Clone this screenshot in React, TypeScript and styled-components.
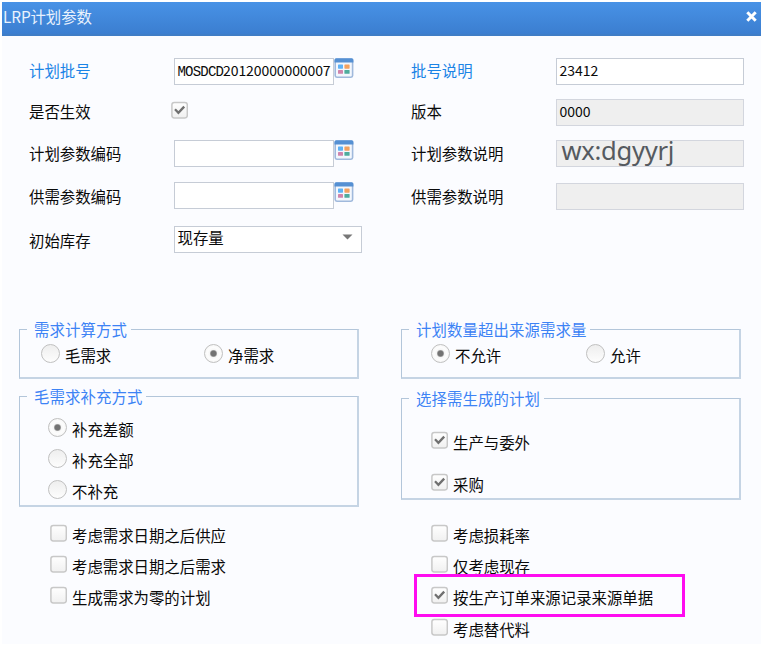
import React from 'react';
import styled, { createGlobalStyle } from 'styled-components';

const GlobalStyle = createGlobalStyle`
  * { box-sizing: border-box; }
  body {
    margin: 0;
    background: #fff;
    font-family: "Noto Sans CJK SC", sans-serif;
    font-size: 15.4px;
    color: #0a0a0a;
  }
`;

const Dialog = styled.div`
  width: 759px;
  height: 642px;
  margin: 2px;
  display: flex;
  flex-direction: column;
  background: #fbfcff;
  overflow: hidden;
`;

const TitleBar = styled.header`
  height: 34px;
  flex: none;
  display: flex;
  justify-content: space-between;
  padding: 0 4px 0 1px;
  background: linear-gradient(#4892e6, #3b7ed0);
  border-bottom: 2px solid #3f7dc6;
  color: #e9f2fd;
`;

const Title = styled.span`
  font-size: 15.4px;
  line-height: 28px;
  letter-spacing: -0.1px;
`;

const CloseIcon = styled.svg`
  width: 11px;
  height: 11px;
  margin-top: 9px;
`;

const Columns = styled.div`
  display: grid;
  grid-template-columns: 382px 377px;
`;

const Fields = styled.div`
  height: 284px;
  padding: 22px 0 0 27px;
`;

const FieldRow = styled.div<{ $h: number }>`
  display: flex;
  height: ${p => p.$h}px;
`;

const Label = styled.label<{ $w?: number; $key?: boolean; $drop?: number }>`
  width: ${p => p.$w ?? 144.5}px;
  flex: none;
  padding-top: ${p => p.$drop ?? 0}px;
  line-height: 24px;
  color: ${p => (p.$key ? '#1b84e6' : '#0a0a0a')};
`;

const Box = styled.div<{ $w: number; $disabled?: boolean }>`
  width: ${p => p.$w}px;
  height: 27px;
  padding-left: 3px;
  line-height: 22px;
  font-size: 14px;
  white-space: nowrap;
  border: 1.5px solid ${p => (p.$disabled ? '#d3d6de' : '#c6ccd6')};
  background: ${p => (p.$disabled ? '#efefef' : '#fff')};
`;

const Prefix = styled.span`
  font-family: "Liberation Mono", monospace;
  font-size: 14px;
  letter-spacing: -0.8px;
`;

const Code = styled.span`
  letter-spacing: -0.1px;
`;

const SelectBox = styled(Box)`
  display: flex;
  align-items: center;
  justify-content: space-between;
  padding: 0 8px 5px 3px;
  font-size: 15.4px;
`;

const Watermark = styled.span`
  display: block;
  padding-left: 2px;
  font-family: "Noto Sans", sans-serif;
  font-size: 25.6px;
  line-height: 24px;
  margin-top: -2px;
  letter-spacing: -0.3px;
  color: #555a60;
`;

const PickerIcon = styled.svg`
  width: 20px;
  height: 21px;
  margin-left: 0.5px;
  flex: none;
`;

const Lower = styled.div`
  display: flex;
  flex-direction: column;
`;

const Group = styled.fieldset<{ $h: number; $x: number; $gap?: number }>`
  width: 340px;
  min-width: 0;
  height: ${p => p.$h}px;
  margin: ${p => p.$gap ?? 0}px 0 0 ${p => p.$x}px;
  padding: 0 0 0 7px;
  border: 1px solid #b3c6da;
  border-right: 2px solid #c5d4e4;
  border-bottom: 2px solid #c5d4e4;
`;

const Legend = styled.legend`
  padding: 0 4px 0 7px;
  height: 18px;
  line-height: 18px;
  letter-spacing: 0.1px;
  color: #3d83f5;
`;

const Options = styled.div<{ $top: number; $left: number }>`
  padding: ${p => p.$top}px 0 0 ${p => p.$left}px;
`;

const Inline = styled.div<{ $first: number; $left: number }>`
  display: grid;
  grid-template-columns: ${p => p.$first}px auto;
  padding: 6px 0 0 ${p => p.$left}px;
`;

const Option = styled.div<{ $h: number; $gap: number }>`
  position: relative;
  display: flex;
  align-items: flex-start;
  gap: ${p => p.$gap}px;
  height: ${p => p.$h}px;
`;

const OptionText = styled.span`
  padding-top: 2px;
  line-height: 18px;
  white-space: nowrap;
`;

const RadioMark = styled.span<{ $on?: boolean }>`
  width: 19px;
  height: 19px;
  flex: none;
  border-radius: 50%;
  border: 1.5px solid #c0c0c0;
  background: ${p =>
    p.$on
      ? 'radial-gradient(circle, #737373 0 2.6px, #f6f6f6 4px, #fdfdfd 6px, #eee)'
      : 'linear-gradient(#eee, #fdfdfd)'};
`;

const CheckSvg = styled.svg`
  width: 17px;
  height: 19px;
  flex: none;
`;

const Highlight = styled.div`
  position: absolute;
  left: -17px;
  top: -12px;
  width: 271px;
  height: 43px;
  border: 3px solid #ff0cf0;
`;

const Check = ({ on }: { on?: boolean }) => (
  <CheckSvg viewBox="0 0 17 19">
    <defs>
      <linearGradient id="face" x1="0" y1="0" x2="0" y2="1">
        <stop offset="0" stopColor="#fff" />
        <stop offset="1" stopColor="#f0f0f0" />
      </linearGradient>
    </defs>
    <rect x=".9" y="1.4" width="15.4" height="15.6" rx="2.4" fill="url(#face)" stroke="#c8c8c8" strokeWidth="1.5" />
    {on && <path d="M4 8.3 7.4 11.8 13.2 5.6" fill="none" stroke="#707070" strokeWidth="2.3" />}
  </CheckSvg>
);

const Picker = () => (
  <PickerIcon viewBox="0 0 20 21">
    <rect x="1.2" y="1.2" width="17.4" height="18" rx="1.6" fill="#f3f7fd" stroke="#a0b9dc" strokeWidth="1.6" />
    <path d="M.5 4.5V1.8Q.5.3 2 .3h15.800Q19.400.3 19.400 1.800v2.700z" fill="#5590d3" />
    <rect x="4" y="6.500" width="5" height="4.200" rx=".6" fill="#5fb2f6" />
    <rect x="10.400" y="6.500" width="5.200" height="4.200" rx=".6" fill="#f3a15f" />
    <rect x="4" y="12" width="5" height="3.800" rx=".6" fill="#d084ac" />
    <rect x="10.400" y="12" width="5.200" height="3.800" rx=".6" fill="#4fac9d" />
  </PickerIcon>
);

const Radio = ({ text, on, h = 31 }: { text: string; on?: boolean; h?: number }) => (
  <Option $h={h} $gap={5}>
    <RadioMark $on={on} />
    <OptionText>{text}</OptionText>
  </Option>
);

const CheckOption = ({ text, on, h = 31, marked }: { text: string; on?: boolean; h?: number; marked?: boolean }) => (
  <Option $h={h} $gap={5}>
    <Check on={on} />
    <OptionText>{text}</OptionText>
    {marked && <Highlight />}
  </Option>
);

export default function App() {
  return (
    <>
      <GlobalStyle />
      <Dialog>
        <TitleBar>
          <Title>LRP计划参数</Title>
          <CloseIcon viewBox="0 0 11 11">
            <path d="M1.300 1.300 9.700 9.700M9.700 1.300 1.300 9.700" stroke="#fff" strokeWidth="3" />
          </CloseIcon>
        </TitleBar>
        <Columns>
          <Fields>
            <FieldRow $h={41}>
              <Label $key>计划批号</Label>
              <Box $w={160}><Prefix>MOSDCD</Prefix><Code>20120000000007</Code></Box>
              <Picker />
            </FieldRow>
            <FieldRow $h={41}>
              <Label $w={142}>是否生效</Label>
              <Options $top={2} $left={0}><Check on /></Options>
            </FieldRow>
            <FieldRow $h={42}>
              <Label $drop={1}>计划参数编码</Label>
              <Box $w={160} />
              <Picker />
            </FieldRow>
            <FieldRow $h={44}>
              <Label $drop={2}>供需参数编码</Label>
              <Box $w={160} />
              <Picker />
            </FieldRow>
            <FieldRow $h={30}>
              <Label $drop={2}>初始库存</Label>
              <SelectBox $w={188}>
                现存量
                <svg width="11" height="6" viewBox="0 0 11 6"><path d="M.5.5h10l-5 5z" fill="#777" /></svg>
              </SelectBox>
            </FieldRow>
          </Fields>
          <Fields>
            <FieldRow $h={41}>
              <Label $key>批号说明</Label>
              <Box $w={188}>23412</Box>
            </FieldRow>
            <FieldRow $h={41}>
              <Label>版本</Label>
              <Box $w={188} $disabled>0000</Box>
            </FieldRow>
            <FieldRow $h={43}>
              <Label $drop={1}>计划参数说明</Label>
              <Box $w={188} $disabled><Watermark>wx:dgyyrj</Watermark></Box>
            </FieldRow>
            <FieldRow $h={43}>
              <Label $drop={1}>供需参数说明</Label>
              <Box $w={188} $disabled />
            </FieldRow>
          </Fields>
          <Lower>
            <Group $h={59} $x={17}>
              <Legend>需求计算方式</Legend>
              <Inline $first={163} $left={14}>
                <Radio text="毛需求" h={20} />
                <Radio text="净需求" on h={20} />
              </Inline>
            </Group>
            <Group $h={120} $x={17} $gap={8}>
              <Legend>毛需求补充方式</Legend>
              <Options $top={13} $left={21}>
                <Radio text="补充差额" on />
                <Radio text="补充全部" />
                <Radio text="不补充" />
              </Options>
            </Group>
            <Options $top={17} $left={48}>
              <CheckOption text="考虑需求日期之后供应" />
              <CheckOption text="考虑需求日期之后需求" />
              <CheckOption text="生成需求为零的计划" />
            </Options>
          </Lower>
          <Lower>
            <Group $h={59} $x={17}>
              <Legend>计划数量超出来源需求量</Legend>
              <Inline $first={155} $left={22}>
                <Radio text="不允许" on h={20} />
                <Radio text="允许" h={20} />
              </Inline>
            </Group>
            <Group $h={111} $x={17} $gap={10}>
              <Legend>选择需生成的计划</Legend>
              <Options $top={24} $left={22}>
                <CheckOption text="生产与委外" on h={42} />
                <CheckOption text="采购" on h={20} />
              </Options>
            </Group>
            <Options $top={24} $left={47}>
              <CheckOption text="考虑损耗率" />
              <CheckOption text="仅考虑现存" />
              <CheckOption text="按生产订单来源记录来源单据" on h={32} marked />
              <CheckOption text="考虑替代料" h={20} />
            </Options>
          </Lower>
        </Columns>
      </Dialog>
    </>
  );
}
